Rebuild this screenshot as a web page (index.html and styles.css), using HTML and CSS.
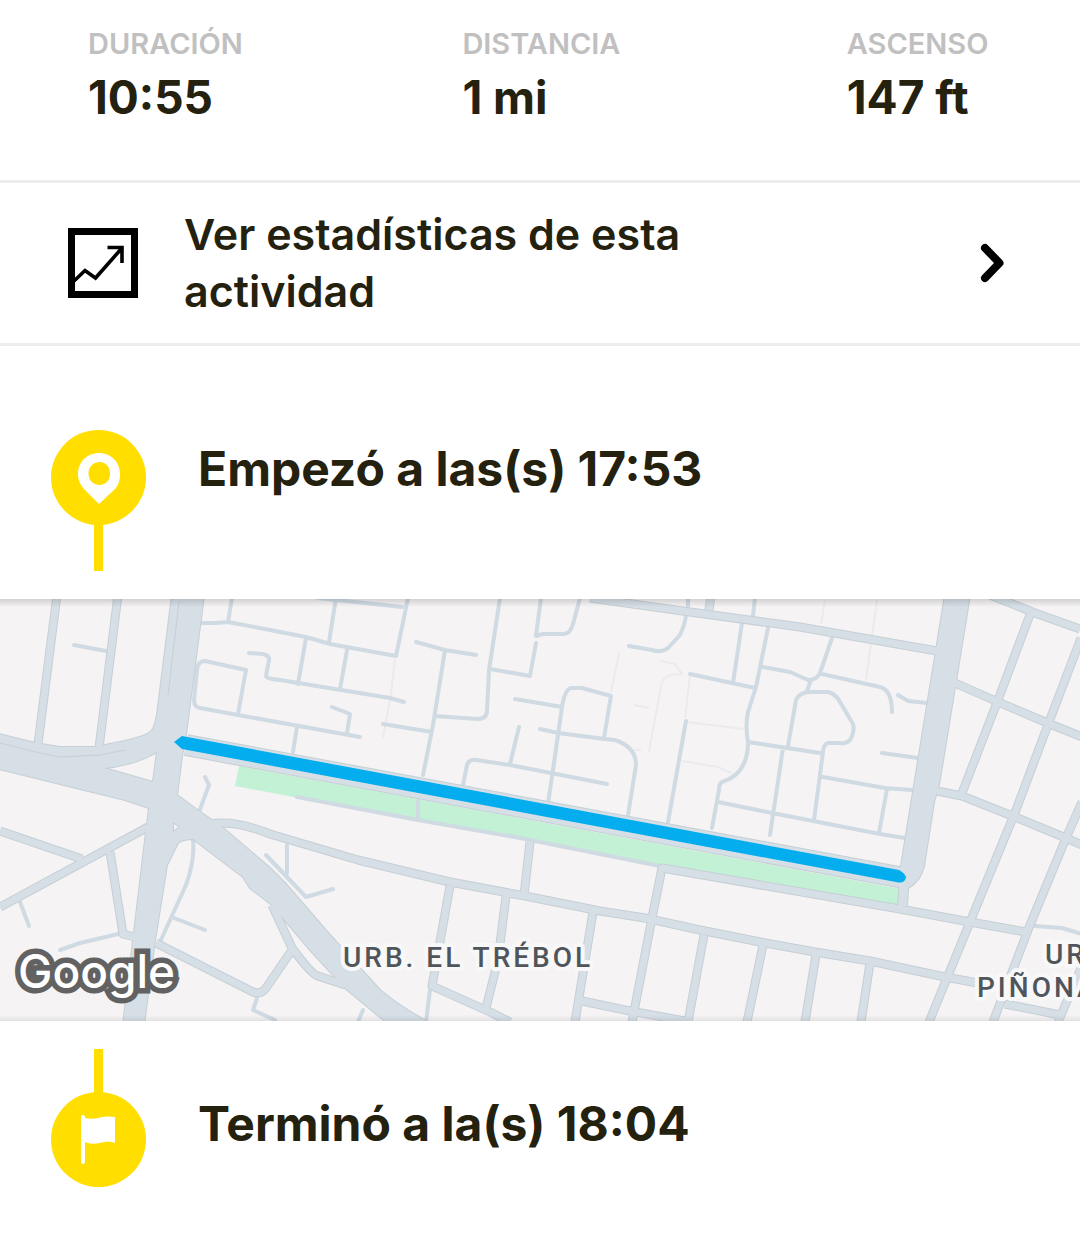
FILE: index.html
```html
<!DOCTYPE html>
<html lang="es">
<head>
<meta charset="utf-8">
<meta name="viewport" content="width=device-width, initial-scale=1">
<title>Actividad</title>
<link rel="stylesheet" href="styles.css">
</head>
<body>
<main class="activity">
  <dl class="stats">
    <div class="stat"><dt>DURACIÓN</dt><dd>10:55</dd></div>
    <div class="stat"><dt>DISTANCIA</dt><dd>1 mi</dd></div>
    <div class="stat"><dt>ASCENSO</dt><dd>147 ft</dd></div>
  </dl>

  <a class="stats-link" href="#estadisticas">
    <svg class="chart-icon" viewBox="0 0 70 70" aria-hidden="true">
      <path d="M3.500 3.500H66.500V66.500H3.500Z" stroke-width="7"/>
      <path d="M6 53L17 42.500L27.500 50L54 20M39.500 19.500H54V35" stroke-width="3.600"/>
    </svg>
    <span class="stats-link-text">Ver estadísticas de esta actividad</span>
    <svg class="chevron" viewBox="0 0 26 40" aria-hidden="true"><path d="M5 5L19.500 20L5 35"/></svg>
  </a>

  <section class="event event-start">
    <svg class="marker" viewBox="0 0 95 141" aria-hidden="true">
      <path class="marker-shape" d="M43 90H52V141H43Z"/>
      <circle class="marker-shape" cx="47.500" cy="47.500" r="47.500"/>
      <path class="marker-glyph" fill-rule="evenodd" d="M48 23C36 23 27 32 27 44C27 50 29 54 33 59L48 74L64 59C68 54 69 50 69 44C69 32 60 23 48 23ZM48.500 32C55 32 59 37 59 43.500C59 50 55 55 48.500 55C42 55 37.500 50 37.500 43.500C37.500 37 42 32 48.500 32Z"/>
    </svg>
    <h2>Empezó a las(s) 17:53</h2>
  </section>

  <div class="map">
    <svg class="map-canvas" viewBox="0 599 1080 422" role="img" aria-label="Mapa del recorrido">
      <defs>
        <g id="roads">
          <path class="area" fill-rule="evenodd" d="M-5 733L35 743L60 747H95L125 741C140 737 149 735 153 729Q155 725 157 715L172 595H204L186 734L182 756L177 795L196 809L222 827L270 868L285 883L330 935L380 990Q400 1007 428 1022H386L345 988L335 977L310 950L272 905L250 888L243 877L193 839Q183 839 178 843L167 865L155 940L144 1025H123L133 941L146 832L149 808L125 800L-5 768ZM104 768Q135 765 157 752L153 782ZM173 822L180 827L173 832Z"/>
          <path class="area" d="M945 595H970L939 785L934 802L924 866Q920 882 908 888L907 906H898L901 866Z"/>
          <path class="w20" d="M186 745L904 878"/>
          <path class="w8" d="M57 595L38 744M118 595L99 748M0 831L82 859M0 907L148 827M110 852L123 934L135 937M156 943L253 992Q261 995 266 988L292 950M272 905L292 948Q312 975 318 976L345 985M212 824Q235 820 270 834L358 860L450 882L525 896L600 911L645 918L700 930L760 942L815 952L870 961L945 977L978 983M1005 1004L1060 1015M530 842L524 895M900 909L662 868L652 918L632 1022M900 909L970 922L1026 932M450 886L432 986L490 1012L510 1022M506 896L498 960L485 1012M593 912L575 1022M704 935L688 1022M763 945L747 1022M816 955L805 1022M870 963L861 1022M582 1001L625 1010L690 1022M590 598L690 612L800 627L937 651M711 595L709 610M990 595L1035 613L1080 629M1031 612L998 700L962 793M1081 638L1049 722L1016 810L970 922L929 1022M1082 802L1066 838L1030 925L993 1022M955 683L998 702L1050 724L1082 737M937 791L962 796L1015 817L1066 838L1082 845M1058 1022L1082 966"/>
        </g>
      </defs>
      <rect class="land" y="599" width="1080" height="422"/>
      <g class="footpaths">
        <path d="M395 659L391 695L383 738M619 653L611 692M660 661L675 664L682 674L670 675Q662 678 661 686L649 752M690 675L685 718M634 705L649 708M634 750H641M686 722L744 729M682 761L718 767L731 773M825 600L821 624M877 600L866 680"/>
      </g>
      <path class="park" d="M239 766L901 889L898 908L662 867L530 841L420 821L235 786Z"/>
      <g class="streets">
        <path d="M74 645L106 651M20 902L29 926M60 950L80 943L118 934M257 998L253 1010L275 1020M193 840Q195 860 186 885L160 942M174 918L205 930M205 777L209 785L199 812M266 855L306 897L333 889M287 845V873M297 797L418 820L520 838L660 866M418 801V820M430 990L426 1022M363 1010L358 1022M1035 926L1062 928L1082 934M688 598V606M755 598L753 616"/>
        <path d="M232 598L228 622M200 623H215L228 622L270 630L306 637L330 644L396 656L408 598M336 598L329 642M318 598L402 607M306 638L298 684M347 650L340 689M249 653L263 654Q270 656 269 660L266 676Q266 679 280 680L390 698L404 702M246 670L205 661Q198 661 197 670L194 700Q194 707 200 708L238 715L360 737M246 670L238 714M332 707L350 714L347 733M297 727L293 752"/>
        <path d="M416 642L445 650L476 655M445 650L433 725L423 775M383 724L432 732M435 716L478 719Q487 719 487 710L489 670L500 598M490 669L530 676L536 643M541 598L536 636M536 636L543 634H562Q570 635 573 624L580 598M515 699L562 707M540 729L558 733L605 739L615 740Q636 747 636 765L628 815M519 727L510 764M463 785L467 765Q469 759 476 760L510 765L607 784M547 810L553 770L562 707Q565 688 572 688H582L611 696L604 738"/>
        <path d="M686 610Q687 620 680 635L668 648Q662 653 652 650L629 646M742 623L733 683M690 674L755 688M768 628L756 687L748 712Q745 725 748 742Q748 774 722 782Q719 784 719 790L712 828M718 802L772 813L880 834L905 838M686 721L668 822M763 667L790 672L808 680Q817 680 820 673L832 638M811 680L807 691M748 742L820 753M788 746L796 700Q800 692 810 692H828Q836 694 840 702L853 724Q855 731 850 740Q846 744 840 743H828Q823 745 823 752L814 820M783 748L770 835M822 674L880 687Q892 690 892 712M898 695L908 701L927 703M882 753L918 758M823 777L885 788L912 790M887 789L879 833"/>
      </g>
      <use class="road-edge" href="#roads"/>
      <use class="road-fill" href="#roads"/>
      <path class="lane" d="M0 743L40 753L60 757L100 755L125 750M179 602L168 695"/>
      <path class="route" d="M174 742L182 736L899 870Q906 874 906 878Q904 884 896 882L182 749Z"/>
      <g class="place">
        <text x="343" y="967">URB. EL TRÉBOL</text>
        <text x="1045" y="964">URB.</text>
        <text x="977" y="997">PIÑONATE</text>
      </g>
      <text class="brand" x="18" y="988">Google</text>
    </svg>
  </div>

  <section class="event event-end">
    <svg class="marker" viewBox="0 0 95 139" aria-hidden="true">
      <path class="marker-shape" d="M43 0H52V48H43Z"/>
      <circle class="marker-shape" cx="47.500" cy="90.500" r="47.500"/>
      <path class="marker-glyph" d="M30 68Q30 66 32 66Q34 66 34 69Q43 71 51 68Q57 67 64 68V94Q58 91 49 94Q40 96 34 93V112Q34 115 32 115Q30 115 30 112Z"/>
    </svg>
    <h2>Terminó a la(s) 18:04</h2>
  </section>
</main>
</body>
</html>
```
FILE: styles.css
```css
* {
  box-sizing: border-box;
}

body {
  margin: 0;
  background: #fff;
  color: #24210f;
  font-family: Inter, "Open Sans", sans-serif;
}

.stats {
  display: grid;
  grid-template-columns: 374fr 384fr 233fr;
  margin: 0;
  padding: 24px 0 50px 88px;
  border-bottom: 3px solid #ececec;
}

.stat dt {
  color: #c1c0c0;
  font-size: 29px;
  font-weight: 600;
  line-height: 40px;
}

.stat dd {
  margin: 0;
  font-size: 46px;
  font-weight: 700;
  line-height: 66px;
}

.stats-link {
  display: flex;
  align-items: center;
  padding: 23px 74px 23px 68px;
  border-bottom: 3px solid #ececec;
  color: inherit;
  text-decoration: none;
}

.chart-icon {
  flex: none;
  width: 70px;
  height: 70px;
  fill: none;
  stroke: #000;
}

.stats-link-text {
  flex: 1;
  margin: 0 240px 0 46px;
  font-size: 43px;
  font-weight: 600;
  line-height: 57px;
}

.chevron {
  flex: none;
  width: 26px;
  height: 40px;
  fill: none;
  stroke: #000;
  stroke-width: 8;
  stroke-linecap: round;
  stroke-linejoin: round;
}

.event {
  display: flex;
  gap: 52px;
  padding-left: 51px;
}

.event-start {
  padding-top: 84px;
  padding-bottom: 28px;
}

.event-end {
  padding-top: 28px;
  padding-bottom: 48px;
}

.event h2 {
  margin: 0;
  font-size: 48px;
  font-weight: 700;
  line-height: 78px;
}

.event-end h2 {
  padding-top: 36px;
}

.marker {
  flex: none;
  width: 95px;
}

.marker-shape {
  fill: #ffde00;
}

.marker-glyph {
  fill: #fff;
}

.map {
  position: relative;
}

.map::after {
  content: "";
  position: absolute;
  inset: 0;
  background:
    linear-gradient(#00000024, #0000) top / 100% 8px no-repeat,
    linear-gradient(#0000, #00000014) bottom / 100% 6px no-repeat;
}

.map-canvas {
  display: block;
  width: 100%;
}

.land {
  fill: #f5f3f4;
}

.park {
  fill: #c3f1d5;
}

.footpaths {
  fill: none;
  stroke: #ebebed;
  stroke-width: 2;
}

.streets {
  fill: none;
  stroke: #cfdae3;
  stroke-width: 4;
  stroke-linecap: round;
  stroke-linejoin: round;
}

.road-edge {
  --edge: 2px;
  fill: #c5cfd5;
  stroke: #c5cfd5;
}

.road-fill {
  --edge: 0px;
  fill: #d6dfe6;
  stroke: #d6dfe6;
}

.area {
  stroke-width: var(--edge);
}

.w8,
.w20 {
  fill: none;
  stroke-linejoin: round;
}

.w8 {
  stroke-width: calc(7px + var(--edge));
}

.w20 {
  stroke-width: calc(20px + var(--edge));
}

.lane {
  fill: none;
  stroke: #c5cfd5;
  stroke-width: 1;
}

.route {
  fill: #03adee;
}

.place {
  fill: #50555b;
  stroke: #f8f8f9;
  stroke-width: 8;
  stroke-linejoin: round;
  paint-order: stroke;
  font-family: Roboto, sans-serif;
  font-size: 28px;
  font-weight: 500;
  letter-spacing: 3px;
}

.brand {
  fill: #fff;
  stroke: #626262;
  stroke-width: 11;
  paint-order: stroke;
  font-family: Inter, sans-serif;
  font-size: 46px;
  font-weight: 500;
}
```
